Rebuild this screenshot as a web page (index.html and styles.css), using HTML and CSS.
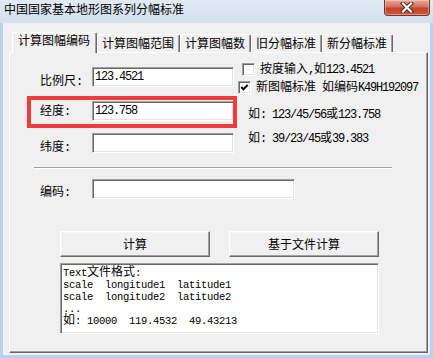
FILE: index.html
```html
<!DOCTYPE html>
<html>
<head>
<meta charset="utf-8">
<title>中国国家基本地形图系列分幅标准</title>
<link rel="stylesheet" href="styles.css">
</head>
<body>
<div class="win">
  <div class="titlebar">
    <div class="title">中国国家基本地形图系列分幅标准</div>
    <div class="close">
      <svg width="16" height="11" viewBox="0 0 16 11"><path d="M4 1.5 L12 9.5 M12 1.5 L4 9.5" stroke="#4a2a24" stroke-width="4.2" stroke-linecap="square"/><path d="M4 1.5 L12 9.5 M12 1.5 L4 9.5" stroke="#ffffff" stroke-width="2.2" stroke-linecap="square"/></svg>
    </div>
  </div>
  <div class="client">
    <div class="tabs">
      <div class="tab sel">计算图幅编码</div>
      <div class="tab">计算图幅范围</div>
      <div class="tab">计算图幅数</div>
      <div class="tab">旧分幅标准</div>
      <div class="tab">新分幅标准</div>
    </div>
    <div class="panel">
      <div class="top">
        <div class="fields">
          <div class="row"><span class="lbl low">比例尺<span class="a">: </span></span><div class="edit"><span class="a">123.4521</span></div></div>
          <div class="row r2 mark"><span class="lbl mid">经度<span class="a">: </span></span><div class="edit"><span class="a">123.758</span></div></div>
          <div class="row r3"><span class="lbl low">纬度<span class="a">: </span></span><div class="edit"></div></div>
        </div>
        <div class="side">
          <div class="chk c1"><span class="box"></span><span class="ctext">按度输入<span class="a">,</span>如<span class="a">123.4521</span></span></div>
          <div class="chk c2"><span class="box"><svg width="9" height="9" viewBox="0 0 9 9"><polyline points="1.3,4 3.4,6.3 7.6,2" fill="none" stroke="#000" stroke-width="1.9"/></svg></span><span class="ctext">新图幅标准<span class="a"> </span>如编码<span class="a">K49H192097</span></span></div>
          <div class="hint h1">如<span class="a">: 123/45/56</span>或<span class="a">123.758</span></div>
          <div class="hint h2">如<span class="a">: 39/23/45</span>或<span class="a">39.383</span></div>
        </div>
      </div>
      <div class="sep"></div>
      <div class="row r4"><span class="lbl code">编码<span class="a">: </span></span><div class="edit wide"></div></div>
      <div class="btns"><div class="btn">计算</div><div class="btn">基于文件计算</div></div>
      <div class="memo">
        <div class="ml"><span class="a">Text</span>文件格式<span class="a">:</span></div>
        <div class="ml"><span class="a">scale  longitude1  latitude1</span></div>
        <div class="ml"><span class="a">scale  longitude2  latitude2</span></div>
        <div class="ml"><span class="a">...</span></div>
        <div class="ml">如<span class="a">: 10000  119.4532  49.43213</span></div>
      </div>
    </div>
  </div>
</div>
</body>
</html>
```

FILE: styles.css
```css
* { box-sizing: border-box; }
html, body { margin: 0; padding: 0; }
body {
  width: 433px;
  height: 358px;
  overflow: hidden;
  background: #b9d1ea;
  font-family: "Noto Sans CJK SC", "Noto Sans", sans-serif;
  font-size: 12px;
  line-height: 12px;
  color: #000;
}
.a {
  font-family: "Liberation Mono", "DejaVu Sans Mono", monospace;
  font-size: 12px;
  letter-spacing: -1.2px;
  line-height: 8px;
  white-space: pre;
}
.win { display: flex; flex-direction: column; height: 358px; }

.titlebar {
  height: 23px;
  display: flex;
  align-items: flex-start;
  background: linear-gradient(#e2eaf4, #d3e0ef);
}
.title {
  margin: 2px 0 0 4px;
  line-height: 13px;
  font-size: 12px;
  color: #000;
}
.close {
  margin-left: auto;
  margin-right: 3px;
  width: 46px;
  height: 16px;
  border: 1px solid #7a3328;
  border-top: none;
  border-radius: 0 0 4px 4px;
  background: linear-gradient(#e9a897, #d4705c 45%, #c2432d 55%, #cf5a3f);
  box-shadow: inset 0 0 0 1px rgba(255,255,255,0.35);
  display: flex;
  align-items: center;
  justify-content: center;
}

.client {
  flex: 1;
  margin: 0 3px 3px 3px;
  background: #f0f0f0;
  padding: 9px 2px 2px 6px;
  display: flex;
  flex-direction: column;
}
.tabs {
  display: flex;
  align-items: flex-end;
  height: 20px;
  padding-left: 3px;
  position: relative;
  z-index: 1;
}
.tab {
  height: 18px;
  border-top: 1px solid #fff;
  border-left: 1px solid #fff;
  border-right: 1px solid #696969;
  box-shadow: inset -1px 0 #a0a0a0;
  border-radius: 2px 2px 0 0;
  padding: 1.5px 5px 0 4px;
  background: #f0f0f0;
  white-space: nowrap;
}
.tab.sel {
  height: 21px;
  margin-bottom: -1px;
  padding: 1px 6px 0 5px;
}
.panel {
  flex: 1;
  border: 1px solid;
  border-color: #fff #696969 #696969 #fff;
  box-shadow: inset -1px -1px #a0a0a0;
  background: #f0f0f0;
}

.top { display: flex; }
.fields { margin-left: 30px; padding-top: 14px; width: 194px; }
.row { display: flex; height: 20px; }
.r2 { margin-top: 14px; }
.r3 { margin-top: 12px; }
.lbl { width: 52px; white-space: nowrap; }
.lbl.low { padding-top: 7px; }
.lbl.mid { padding-top: 2.5px; }
.lbl.code { padding-top: 5.5px; }

.edit {
  width: 142px;
  height: 20px;
  background: #fff;
  border: 1px solid;
  border-color: #a0a0a0 #fff #fff #a0a0a0;
  box-shadow: inset 1px 1px #696969, inset -1px -1px #e3e3e3;
  padding: 1px 0 0 2px;
}
.edit.wide { width: 203px; }

.mark { position: relative; }
.mark::before {
  content: "";
  position: absolute;
  left: -13px;
  top: -5px;
  right: -3px;
  bottom: -7px;
  border: 4px solid #ef3b3b;
  pointer-events: none;
  z-index: 2;
}

.side {
  margin-left: 4px;
  padding-top: 10px;
  display: flex;
  flex-direction: column;
  align-items: flex-start;
}
.chk { display: flex; align-items: flex-start; white-space: nowrap; }
.c1 { margin-left: 4px; }
.c2 { margin-top: 5px; }
.box {
  width: 13px;
  height: 13px;
  margin-right: 5px;
  background: #fff;
  border: 1px solid;
  border-color: #a0a0a0 #fff #fff #a0a0a0;
  box-shadow: inset 1px 1px #696969, inset -1px -1px #e3e3e3;
  display: flex;
  align-items: center;
  justify-content: center;
}
.ctext { margin-top: -1px; }
.hint { margin-left: 10px; white-space: nowrap; }
.h1 { margin-top: 13px; }
.h2 { margin-top: 12px; }

.sep {
  margin: 14px 0 0 24px;
  width: 358px;
  height: 2px;
  border-top: 1px solid #a0a0a0;
  border-bottom: 1px solid #fff;
}
.r4 { margin: 10px 0 0 30px; }

.btns { display: flex; gap: 19px; margin: 32px 0 0 50px; }
.btn {
  width: 150px;
  height: 26px;
  border: 1px solid;
  border-color: #fff #696969 #696969 #fff;
  box-shadow: inset -1px -1px #a0a0a0, inset 1px 1px #f6f6f6;
  background: #f0f0f0;
  text-align: center;
  line-height: 24px;
}

.memo {
  margin: 6px 0 0 50px;
  width: 319px;
  height: 71px;
  background: #fff;
  border: 1px solid;
  border-color: #a0a0a0 #fff #fff #a0a0a0;
  box-shadow: inset 1px 1px #696969, inset -1px -1px #e3e3e3;
  padding: 1px 0 0 2px;
  white-space: nowrap;
}
.ml { height: 12px; line-height: 12px; }
.memo .a {
  font-size: 10.5px;
  letter-spacing: -0.3px;
  line-height: 8px;
}
```
